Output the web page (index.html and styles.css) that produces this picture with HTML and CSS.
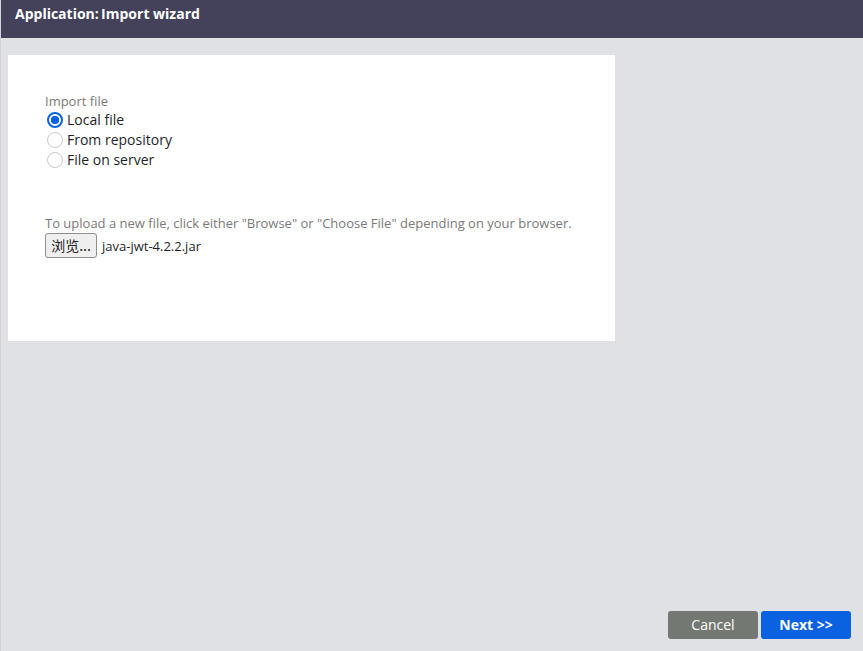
FILE: index.html
```html
<!DOCTYPE html>
<html lang="en">

<head>
  <meta charset="UTF-8" />
  <title>Application: Import wizard</title>
  <link rel="stylesheet" href="styles.css">
</head>

<body>
  <div class="janela">
    <header class="topo">
      <h1>Application:&#8201;Import wizard</h1>
    </header>

    <div class="conteudo">
      <div class="painel">
        <div class="grupo">
          <span class="rotulo">Import file</span>
          <label class="opcao"><input type="radio" name="origem" checked> Local file</label>
          <label class="opcao"><input type="radio" name="origem"> From repository</label>
          <label class="opcao"><input type="radio" name="origem"> File on server</label>
        </div>

        <div class="upload">
          <span class="rotulo">To upload a new file, click either "Browse" or "Choose File" depending on your browser.</span>
          <div class="arquivo">
            <button class="btn-procurar">浏览...</button>
            <span>java-jwt-4.2.2.jar</span>
          </div>
        </div>
      </div>
    </div>

    <!-- Botões do rodapé -->
    <footer class="rodape">
      <button class="btn cancelar">Cancel</button>
      <button class="btn proximo">Next &gt;&gt;</button>
    </footer>
  </div>
</body>

</html>
```

FILE: styles.css
```css
body {
  margin: 0;
  padding: 0;
  font-family: "Open Sans", sans-serif;
  background: #dfe1e5;
}

.janela {
  height: 651px;
  display: flex;
  flex-direction: column;
  border-left: 1px solid #cfd2d6;
  box-sizing: border-box;
}

.topo {
  height: 38px;
  background: #43425a;
  display: flex;
  align-items: center;
  padding-left: 14px;
}

.topo h1 {
  margin: 0 0 12px 0;
  font-size: 14px;
  font-weight: bold;
  color: #fff;
}

.conteudo {
  flex: 1;
  padding: 17px 0 0 7px;
}

.painel {
  width: 607px;
  height: 286px;
  background: #fff;
  box-sizing: border-box;
  padding: 38px 0 0 37px;
}

.rotulo {
  display: block;
  font-size: 13px;
  color: #7a7a7a;
  line-height: 17px;
}

.grupo {
  display: flex;
  flex-direction: column;
}

.opcao {
  display: flex;
  align-items: center;
  font-size: 14px;
  color: #1e1f2b;
  line-height: 20px;
  height: 20px;
}

.opcao input {
  appearance: none;
  width: 16px;
  height: 16px;
  margin: 0 4px 0 2px;
  border: 1px solid #c9c9c9;
  border-radius: 50%;
  background: #fff;
  box-sizing: border-box;
}

.opcao input:checked {
  border: 2px solid #0a62e0;
  background: radial-gradient(circle, #0a62e0 0 4px, #fff 4.5px);
}

.upload {
  margin-top: 45px;
}

.arquivo {
  display: flex;
  align-items: center;
  gap: 5px;
  margin-top: 1px;
  font-size: 13px;
  color: #1e1f2b;
}

.btn-procurar {
  height: 25px;
  width: 52px;
  padding: 0 0 1px 0;
  font-family: "Noto Sans CJK SC", "Open Sans", sans-serif;
  font-size: 14px;
  color: #222;
  background: #efefef;
  border: 1px solid #8f8f8f;
  border-radius: 3px;
}

.rodape {
  display: flex;
  justify-content: flex-end;
  gap: 3px;
  padding: 0 12px 12px 0;
}

.btn {
  width: 90px;
  height: 28px;
  padding: 0 0 2px 0;
  border: none;
  border-radius: 3px;
  font-family: "Open Sans", sans-serif;
  font-size: 14px;
  color: #fff;
}

.cancelar {
  background: #737873;
}

.proximo {
  background: #0a62e0;
  font-weight: bold;
}
```
